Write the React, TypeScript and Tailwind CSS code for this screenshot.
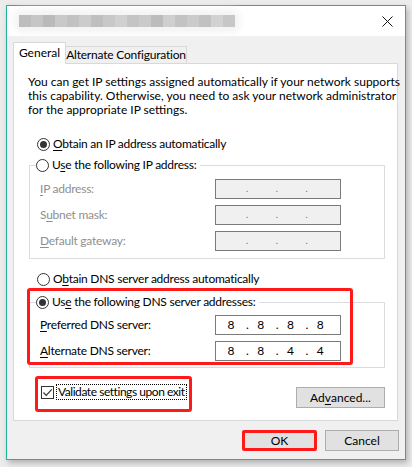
import React from "react";

const font = "font-['Lato',sans-serif]";

function Radio({ checked }: { checked?: boolean }) {
  return (
    <span className="flex h-[13px] w-[13px] shrink-0 items-center justify-center rounded-full border border-[#333333] bg-white">
      {checked ? <span className="h-[7px] w-[7px] rounded-full bg-[#333333]" /> : null}
    </span>
  );
}

function U({ children }: { children: React.ReactNode }) {
  return <span className="underline underline-offset-2">{children}</span>;
}

function IpField({ value, disabled }: { value?: string[]; disabled?: boolean }) {
  const parts = value ?? ["", "", "", ""];
  return (
    <div
      className={
        "flex h-[20px] w-[126px] items-center border pl-[5px] text-[12px] tracking-normal " +
        (disabled ? "border-[#7a7a7a] bg-[#f0f0f0] text-[#6d6d8d]" : "border-[#7a7a7a] bg-white text-black")
      }
    >
      {parts.map((p, i) => (
        <div key={i} className="flex w-[30px] items-center">
          <span className="w-[20px] text-center">{p}</span>
          {i < 3 ? <span className={"ml-[5px] " + (disabled ? "text-[9px]" : "")}>.</span> : null}
        </div>
      ))}
    </div>
  );
}

function Button({ children, red }: { children: React.ReactNode; red?: boolean }) {
  return (
    <div
      className={
        "flex h-[21px] items-center justify-center bg-[#e1e1e1] text-[12px] text-black " +
        (red ? "rounded-[2px] border-[3px] border-[#ff1a1a]" : "border border-[#adadad]")
      }
    >
      {children}
    </div>
  );
}

const blocks = ["#bdbdbd", "#c6c6c6", "#bababa", "#c9c9c9", "#c2c2c2", "#cccccc", "#bfbfbf", "#c8c8c8", "#d0d0d0", "#c4c4c4", "#cacaca", "#bcbcbc", "#cfcfcf", "#c3c3c3", "#cbcbcb", "#c1c1c1", "#d2d2d2", "#c7c7c7"];

export default function App() {
  return (
    <div className={"h-[467px] w-[412px] bg-[#ececec] pl-[6px] pt-[5px] " + font}>
      <div className="h-[455px] w-[400px] border border-[#1fb39a] bg-[#f0f0f0] shadow-[2px_3px_6px_rgba(0,0,0,0.25)]">
        {/* title bar */}
        <div className="flex h-[30px] items-center justify-between bg-white pl-[12px] pr-[10px]">
          <div className="flex h-[12px] rounded-sm shadow-[0_0_6px_6px_#f3f5f3]">
            {blocks.map((c, i) => (
              <span key={i} className="h-[12px] w-[12px]" style={{ background: c }} />
            ))}
          </div>
          <svg width="11" height="11" viewBox="0 0 11 11" className="mr-[2px]">
            <path d="M0.5 0.5 L10.5 10.5 M10.5 0.5 L0.5 10.5" stroke="#111" strokeWidth="1" />
          </svg>
        </div>

        <div className="pl-[6px] pr-[6px] pt-[6px]">
          {/* tabs */}
          <div className="relative z-10 -mb-px flex h-[22px] items-end whitespace-nowrap text-[12px] text-black">
            <div className="flex h-[22px] w-[53px] items-center justify-center border border-b-0 border-[#d9d9d9] bg-white pb-[2px]">
              General
            </div>
            <div className="mb-px flex h-[17px] w-[121px] items-center justify-center border border-b-0 border-l-0 border-[#d9d9d9] bg-[#f0f0f0] tracking-[-0.2px]">
              Alternate Configuration
            </div>
          </div>

          {/* panel */}
          <div className="relative h-[358px] w-[385px] whitespace-nowrap border border-[#d9d9d9] bg-white text-[12px] text-black">
            <p className="ml-[14px] mt-[11px] leading-[14px]">
              You can get IP settings assigned automatically if your network supports
              <br />
              this capability. Otherwise, you need to ask your network administrator
              <br />
              for the appropriate IP settings.
            </p>

            <div className="ml-[23px] mt-[19px] flex h-[16px] items-center gap-[3px] tracking-[-0.25px]">
              <Radio checked />
              <span>
                <U>O</U>btain an IP address automatically
              </span>
            </div>

            <fieldset className="ml-[15px] mt-[5px] w-[356px] border border-[#dcdcdc] pb-[7px] tracking-[-0.25px]">
              <legend className="ml-[6px] flex h-[16px] items-center gap-[3px] bg-white pr-[4px]">
                <Radio />
                <span>
                  U<U>s</U>e the following IP address:
                </span>
              </legend>
              <div className="flex flex-col gap-[6px] pl-[10px] pt-[6px] text-[#8f8f8f]">
                <div className="flex h-[20px] items-center">
                  <span className="w-[175px]">
                    <U>I</U>P address:
                  </span>
                  <IpField disabled />
                </div>
                <div className="flex h-[20px] items-center">
                  <span className="w-[175px]">
                    S<U>u</U>bnet mask:
                  </span>
                  <IpField disabled />
                </div>
                <div className="flex h-[20px] items-center">
                  <span className="w-[175px]">
                    <U>D</U>efault gateway:
                  </span>
                  <IpField disabled />
                </div>
              </div>
            </fieldset>

            <div className="ml-[23px] mt-[12px] flex h-[16px] items-center gap-[3px] tracking-[-0.25px]">
              <Radio />
              <span>
                O<U>b</U>tain DNS server address automatically
              </span>
            </div>

            <fieldset className="ml-[15px] mt-[7px] w-[356px] border border-[#dcdcdc] pb-[6px] tracking-[-0.25px]">
              <legend className="ml-[6px] flex h-[16px] items-center gap-[3px] bg-white pr-[4px]">
                <Radio checked />
                <span>
                  Us<U>e</U> the following DNS server addresses:
                </span>
              </legend>
              <div className="flex flex-col gap-[6px] pl-[10px] pt-[5px]">
                <div className="flex h-[20px] items-center">
                  <span className="w-[175px]">
                    <U>P</U>referred DNS server:
                  </span>
                  <IpField value={["8", "8", "8", "8"]} />
                </div>
                <div className="flex h-[20px] items-center">
                  <span className="w-[175px]">
                    <U>A</U>lternate DNS server:
                  </span>
                  <IpField value={["8", "8", "4", "4"]} />
                </div>
              </div>
            </fieldset>

            <div className="mt-[16px] flex items-start justify-between pr-[12px]">
              <div className="ml-[27px] flex h-[16px] items-center gap-[2px]">
                <span className="flex h-[13px] w-[13px] items-center justify-center border border-[#333333] bg-white">
                  <svg width="11" height="11" viewBox="0 0 11 11">
                    <path d="M1.5 5.5 L4.2 8.3 L9.8 2.3" fill="none" stroke="#333" strokeWidth="1.2" />
                  </svg>
                </span>
                <span className="flex h-[16px] items-center border border-dotted border-black px-[1px] leading-none tracking-[-0.45px]">
                  Validate settings upon exit
                </span>
              </div>
              <div className="mt-[3px] w-[89px]">
                <Button>
                  Ad<U>v</U>anced...
                </Button>
              </div>
            </div>

            {/* red highlights */}
            <div className="absolute left-[13px] top-[224px] h-[77px] w-[326px] rounded-[3px] border-[3px] border-[#ff1a1a]" />
            <div className="absolute left-[21px] top-[312px] h-[36px] w-[157px] rounded-[3px] border-[3px] border-[#ff1a1a]" />
          </div>

          {/* bottom buttons */}
          <div className="mt-[9px] flex justify-end gap-[8px]">
            <div className="w-[75px]">
              <Button red>OK</Button>
            </div>
            <div className="w-[74px]">
              <Button>Cancel</Button>
            </div>
          </div>
        </div>
      </div>
    </div>
  );
}
